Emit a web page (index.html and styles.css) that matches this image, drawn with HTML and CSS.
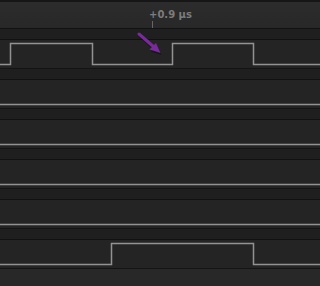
FILE: index.html
```html
<!DOCTYPE html>
<html>
<head>
<meta charset="utf-8">
<link rel="stylesheet" href="styles.css">
</head>
<body>
<div class="view">
  <div class="ruler">
    <span class="ruler-label">+0.9 µs</span>
    <span class="ruler-tick"></span>
  </div>
  <div class="band"></div>
  <div class="trace">
    <svg class="wave" width="320" height="28" viewBox="0 0 320 28"><path d="M0 24.5 H10.5 V3.5 H92.5 V24.5 H172.5 V3.5 H253.5 V24.5 H320"/></svg>
  </div>
  <div class="band"></div>
  <div class="trace">
    <svg class="wave" width="320" height="28" viewBox="0 0 320 28"><path d="M0 24.5 H320"/></svg>
  </div>
  <div class="band"></div>
  <div class="trace">
    <svg class="wave" width="320" height="28" viewBox="0 0 320 28"><path d="M0 24.5 H320"/></svg>
  </div>
  <div class="band"></div>
  <div class="trace">
    <svg class="wave" width="320" height="28" viewBox="0 0 320 28"><path d="M0 24.5 H320"/></svg>
  </div>
  <div class="band"></div>
  <div class="trace">
    <svg class="wave" width="320" height="28" viewBox="0 0 320 28"><path d="M0 24.5 H320"/></svg>
  </div>
  <div class="band"></div>
  <div class="trace">
    <svg class="wave" width="320" height="28" viewBox="0 0 320 28"><path d="M0 24.5 H111.5 V3.5 H253.5 V24.5 H320"/></svg>
  </div>
  <div class="footer"></div>
  <svg class="arrow" width="40" height="40" viewBox="0 0 40 40">
    <path class="arrow-shadow" d="M3 5 L19 19"/>
    <path class="arrow-shadow-head" d="M24.5 24 L13.5 20.5 L20 14 Z"/>
    <path class="arrow-line" d="M2 3 L18 17"/>
    <path class="arrow-head" d="M23.5 22 L12.5 18.5 L19 12 Z"/>
  </svg>
</div>
</body>
</html>
```
FILE: styles.css
```css
html, body {
  margin: 0;
  padding: 0;
  background: #242424;
}
.view {
  position: relative;
  width: 320px;
  height: 286px;
  overflow: hidden;
  display: flex;
  flex-direction: column;
  background: #282828;
}
.ruler {
  position: relative;
  height: 26px;
  flex: none;
  border-top: 2px solid #161616;
  border-bottom: 1px solid #121212;
  background: linear-gradient(#2c2c2c, #282828);
}
.ruler-label {
  position: absolute;
  left: 149px;
  top: 7px;
  font-family: "DejaVu Sans", sans-serif;
  font-weight: bold;
  font-size: 10px;
  line-height: 12px;
  color: #7c7c7c;
}
.ruler-tick {
  position: absolute;
  left: 152px;
  top: 19px;
  width: 1px;
  height: 7px;
  background: #666;
}
.band {
  height: 10px;
  flex: none;
  background: #1f1f1f;
  border-bottom: 1px solid #111;
}
.trace {
  height: 28px;
  flex: none;
  background: #242424;
  border-bottom: 1px solid #141414;
}
.wave {
  display: block;
}
.wave path {
  fill: none;
  stroke: #929292;
  stroke-width: 1.5;
}
.footer {
  flex: 1;
  background: #282828;
}
.arrow {
  position: absolute;
  left: 137px;
  top: 31px;
}
.arrow-shadow {
  fill: none;
  stroke: rgba(0, 0, 0, 0.35);
  stroke-width: 3;
  stroke-linecap: round;
}
.arrow-shadow-head {
  fill: rgba(0, 0, 0, 0.35);
}
.arrow-line {
  fill: none;
  stroke: #7a2a9c;
  stroke-width: 3;
  stroke-linecap: round;
}
.arrow-head {
  fill: #7a2a9c;
}
```
